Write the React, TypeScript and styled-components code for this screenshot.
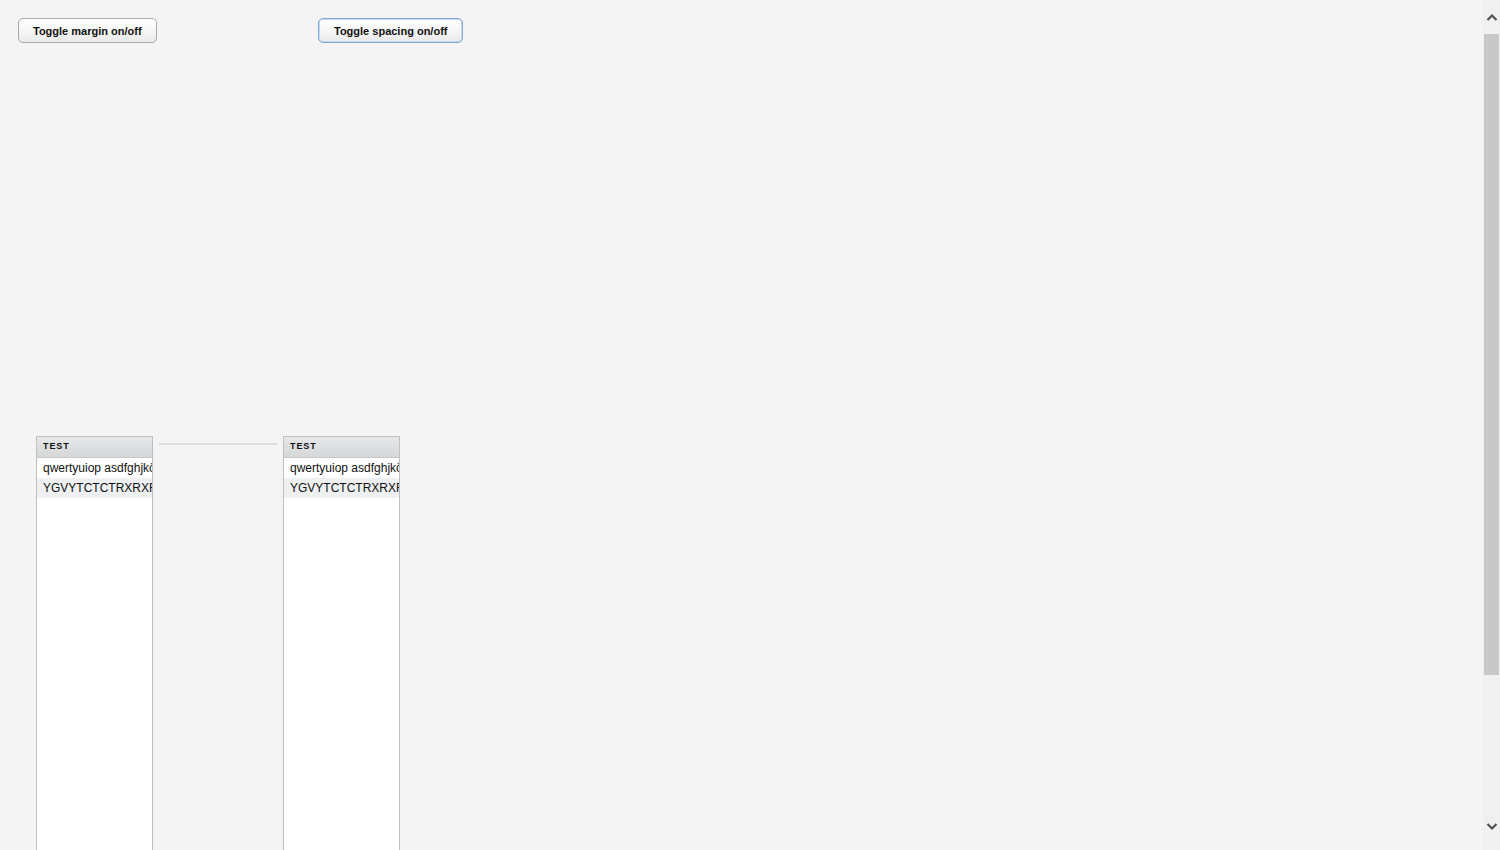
import React from 'react';
import styled, { createGlobalStyle } from 'styled-components';

const GlobalStyle = createGlobalStyle`
  html, body {
    margin: 0;
    padding: 0;
    height: 100%;
    overflow: hidden;
    background: #f4f4f4;
    font-family: Arial, "Liberation Sans", sans-serif;
  }
`;

const Page = styled.div`
  display: flex;
  height: 850px;
  overflow: hidden;
`;

const Main = styled.div`
  flex: 1;
  padding: 18px 0 0 18px;
  display: flex;
  flex-direction: column;
`;

const Toolbar = styled.div`
  display: flex;
  height: 25px;
`;

const Cell = styled.div`
  width: 300px;
`;

const Button = styled.button<{ $focused?: boolean }>`
  height: 25px;
  padding: 0 ${p => (p.$focused ? 15 : 14)}px;
  border-radius: 5px;
  border: 1px solid ${p => (p.$focused ? '#7fa9d6' : '#a9a9a9')};
  box-shadow: ${p => (p.$focused ? '0 0 0 1px #c5daf0 inset' : 'none')};
  background: linear-gradient(#ffffff, #f6f6f6 50%, #e9e9e9);
  font-family: Arial, "Liberation Sans", sans-serif;
  font-weight: bold;
  font-size: 11px;
  line-height: 22px;
  color: #111;
  cursor: pointer;
`;

const Lists = styled.div`
  display: flex;
  align-items: flex-start;
  margin: 393px 0 0 18px;
`;

const Panel = styled.div`
  width: 115px;
  height: 420px;
  border: 1px solid #c0c0c0;
  background: #fff;
  overflow: hidden;
`;

const Header = styled.div`
  height: 20px;
  line-height: 19px;
  padding-left: 6px;
  border-bottom: 1px solid #c8c8c8;
  background: linear-gradient(#e6e7e9, #d6d7d9);
  font-size: 9px;
  font-weight: bold;
  letter-spacing: 0.9px;
  color: #111;
`;

const Row = styled.div<{ $alt?: boolean }>`
  height: 20px;
  line-height: 20px;
  padding-left: 6px;
  white-space: nowrap;
  overflow: hidden;
  font-size: 12px;
  color: #111;
  background: ${p => (p.$alt ? '#eef0f2' : '#fff')};
`;

const Separator = styled.div`
  width: 118px;
  height: 2px;
  margin: 7px 6px 0 6px;
  background: #dedede;
`;

const Scrollbar = styled.div`
  width: 17px;
  display: flex;
  flex-direction: column;
  align-items: center;
  background: #f0f0f0;
`;

const Arrow = styled.div<{ $h: number }>`
  height: ${p => p.$h}px;
  display: flex;
  align-items: center;
  justify-content: center;
`;

const Thumb = styled.div`
  width: 15px;
  height: 641px;
  background: #c8c8c8;
`;

const Track = styled.div`
  flex: 1;
`;

const rows = ['qwertyuiop asdfghjkö', 'YGVYTCTCTRXRXRXRXRX'];

const List = () => (
  <Panel>
    <Header>TEST</Header>
    {rows.map((r, i) => (
      <Row key={r} $alt={i % 2 === 1}>
        {r}
      </Row>
    ))}
  </Panel>
);

const App: React.FC = () => (
  <>
    <GlobalStyle />
    <Page>
      <Main>
        <Toolbar>
          <Cell>
            <Button>Toggle margin on/off</Button>
          </Cell>
          <Cell>
            <Button $focused>Toggle spacing on/off</Button>
          </Cell>
        </Toolbar>
        <Lists>
          <List />
          <Separator />
          <List />
        </Lists>
      </Main>
      <Scrollbar>
        <Arrow $h={34}>
          <svg width="12" height="8" viewBox="0 0 12 8">
            <path d="M1.5 7 L6 2.5 L10.5 7" fill="none" stroke="#505050" strokeWidth="2.2" />
          </svg>
        </Arrow>
        <Thumb />
        <Track />
        <Arrow $h={46}>
          <svg width="12" height="8" viewBox="0 0 12 8">
            <path d="M1.5 1 L6 5.5 L10.5 1" fill="none" stroke="#505050" strokeWidth="2.2" />
          </svg>
        </Arrow>
      </Scrollbar>
    </Page>
  </>
);

export default App;
